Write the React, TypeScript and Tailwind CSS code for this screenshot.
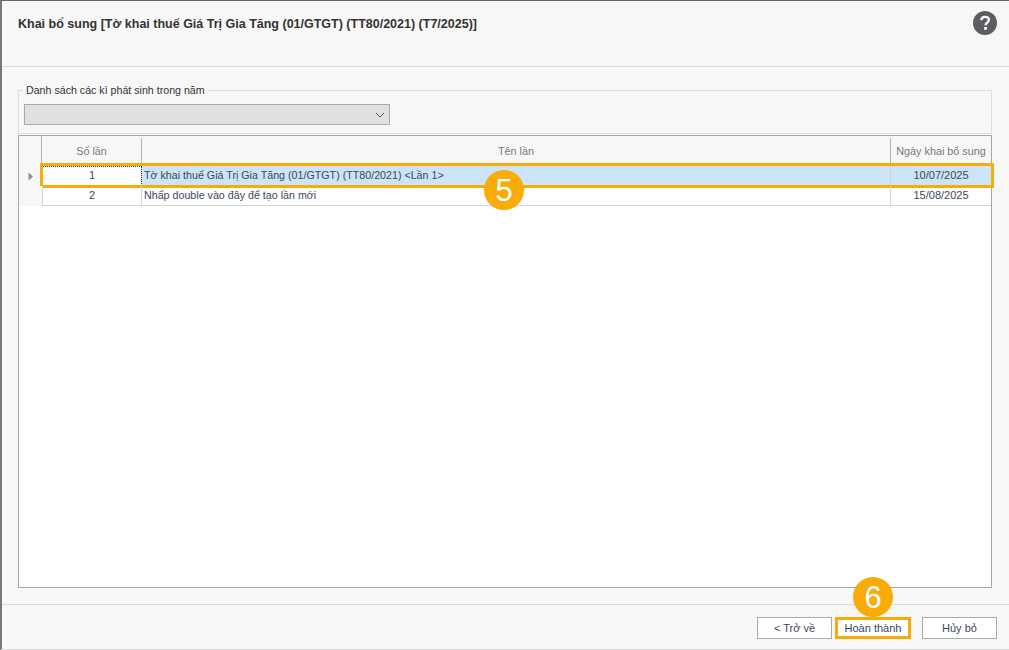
import React from 'react';

const FONT = { fontFamily: '"Liberation Sans", "Noto Sans", sans-serif' };

const ROWS = [
  { no: '1', name: 'Tờ khai thuế Giá Trị Gia Tăng (01/GTGT) (TT80/2021) <Lần 1>', date: '10/07/2025' },
  { no: '2', name: 'Nhấp double vào đây để tạo lần mới', date: '15/08/2025' },
];

const COLS = 'grid grid-cols-[23px_100px_749px_1fr]';

function Badge({ label, className }: { label: string; className: string }) {
  return (
    <div className={`absolute z-10 flex h-[40px] w-[40px] items-center justify-center rounded-full bg-[#f9ab07] text-[31px] leading-none text-white ${className}`}>
      {label}
    </div>
  );
}

function HelpIcon() {
  return (
    <svg width="24" height="24" viewBox="0 0 24 24">
      <circle cx="12" cy="12" r="12" fill="#5b5d63" />
      <path d="M8.2 9.2c.2-2.2 1.7-3.4 3.9-3.4 2.2 0 3.8 1.2 3.8 3.1 0 2.6-3.4 2.8-3.4 5.4" fill="none" stroke="#fff" strokeWidth="2.3" />
      <rect x="11.1" y="16" width="2.8" height="2.8" fill="#fff" />
    </svg>
  );
}

export default function App() {
  return (
    <div style={FONT} className="flex h-[650px] w-[1009px] flex-col overflow-hidden border-t border-b border-l-2 border-t-[#666] border-b-[#ddd] border-l-[#777] bg-[#f7f7f7] text-[11px] text-[#3d4759]">
      <div className="flex h-[66px] shrink-0 items-start justify-between border-b border-[#d9d9d9] pl-[16px] pr-[12px] pt-[10px]">
        <h1 className="pt-[5px] text-[12.5px] leading-[16px] font-bold text-[#333]">
          Khai bổ sung [Tờ khai thuế Giá Trị Gia Tăng (01/GTGT) (TT80/2021) (T7/2025)]
        </h1>
        <HelpIcon />
      </div>

      <div className="flex min-h-0 flex-1 flex-col pl-[16px] pr-[17px] pt-[16px]">
        <fieldset className="h-[51px] shrink-0 border border-[#ddd] px-[5px]">
          <legend className="ml-[-1px] px-[3px] text-[10.65px] leading-[14px] text-[#333]">Danh sách các kì phát sinh trong năm</legend>
          <div className="mt-[7px] flex h-[21px] w-[366px] items-center justify-end border border-[#a9a9a9] bg-[#e0e0e0] pr-[3px]">
            <svg width="12" height="12" viewBox="0 0 12 12">
              <path d="M2 4l4 4 4-4" fill="none" stroke="#555" strokeWidth="1" />
            </svg>
          </div>
        </fieldset>

        <div className="mt-[1px] flex min-h-0 flex-1 flex-col border border-[#a6a6a6] bg-white">
          <div className={`${COLS} h-[30px] shrink-0 bg-[#f7f7f7] text-[10.8px] text-[#777]`}>
            <div className="border-r border-[#b5b5b5]" />
            <div className="mt-[2px] flex items-center justify-center border-r border-[#b5b5b5] pb-[2px]">Số lần</div>
            <div className="mt-[2px] flex items-center justify-center border-r border-[#b5b5b5] pb-[2px]">Tên lần</div>
            <div className="mt-[2px] flex items-center justify-center pb-[2px]">Ngày khai bổ sung</div>
          </div>

          {ROWS.map((row, i) => (
            <div key={row.no} className={`${COLS} relative h-[20px] shrink-0`}>
              <div className="flex items-center justify-center bg-[#f7f7f7]">
                {i === 0 && (
                  <svg width="6" height="9" viewBox="0 0 6 9">
                    <path d="M0.5 0.5L5 4.5L0.5 8.5Z" fill="#8f8f8f" />
                  </svg>
                )}
              </div>
              <div className={`flex items-center justify-center border-r border-b border-l border-[#d2d2d2] ${i === 0 ? 'bg-white outline-1 -outline-offset-1 outline-dotted outline-[#333]' : ''}`}>{row.no}</div>
              <div className={`flex items-center border-r border-b border-[#d2d2d2] pl-[2px] text-[10.7px] ${i === 0 ? 'bg-[#cbe4f7]' : ''}`}>{row.name}</div>
              <div className={`flex items-center justify-center border-b border-[#d2d2d2] ${i === 0 ? 'bg-[#cbe4f7]' : ''}`}>{row.date}</div>
              {i === 0 && (
                <div className="absolute top-[-3px] right-[-3px] bottom-[-2px] left-[21px] border-[3px] border-[#f9ab07]" />
              )}
              {i === 0 && <Badge label="5" className="top-[4px] left-[465px]" />}
            </div>
          ))}
        </div>
      </div>

      <div className="mt-[16px] flex h-[45px] shrink-0 items-start justify-end border-t border-[#d9d9d9] pt-[12px] pr-[12px]">
        <button className="h-[22px] w-[75px] border border-[#a9a9a9] bg-white text-[11px] leading-none">&lt; Trở về</button>
        <div className="relative ml-[3px]">
          <Badge label="6" className="top-[-40px] left-[18px]" />
          <button className="h-[22px] w-[76px] border-[3px] border-[#f9ab07] bg-white text-[11px] leading-none">Hoàn thành</button>
        </div>
        <button className="ml-[11px] h-[22px] w-[75px] border border-[#a9a9a9] bg-white text-[11px] leading-none">Hủy bỏ</button>
      </div>
    </div>
  );
}
